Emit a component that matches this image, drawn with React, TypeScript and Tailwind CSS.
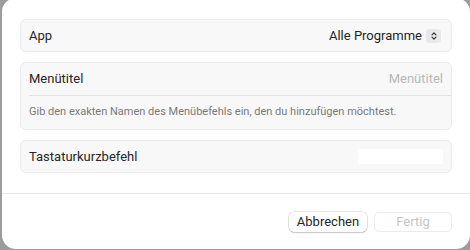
import React from "react";

const font = { fontFamily: "Roboto, 'Liberation Sans', sans-serif" };

/** Up/down chevron in a small rounded box (popup button indicator) */
const Stepper: React.FC = () => (
  <span className="flex h-[14px] w-[15px] items-center justify-center rounded-[4px] bg-[#e8e8e8]">
    <svg viewBox="0 0 10 12" className="h-[10px] w-[8px] text-[#333]" aria-hidden="true">
      <path d="M2.5 4.5L5 2l2.5 2.5M2.5 7.5L5 10l2.5-2.5" fill="none" stroke="currentColor" strokeWidth="1.4" strokeLinecap="round" strokeLinejoin="round" />
    </svg>
  </span>
);

export default function App() {
  return (
    <div className="h-[250px] w-[470px] overflow-hidden bg-[#9c9c9c] text-[13px] text-[#262626]" style={font}>
      <div className="ml-[2px] mt-[-2px] flex h-[251px] w-[468px] flex-col rounded-[14px] bg-white">
        <div className="flex flex-col gap-[10px] px-[18px] pt-[21px]">
          {/* App */}
          <div className="flex h-[33px] items-center justify-between rounded-[6px] border border-[#ececec] bg-[#f8f8f8] pl-[8px] pr-[10px]">
            <span>App</span>
            <div className="flex items-center gap-[4px]">
              <span>Alle Programme</span>
              <Stepper />
            </div>
          </div>

          {/* Menütitel */}
          <div className="flex h-[68px] flex-col rounded-[6px] border border-[#ececec] bg-[#f8f8f8] pl-[8px]">
            <div className="flex h-[33px] items-center justify-between border-b border-[#e4e4e4] pr-[8px]">
              <span>Menütitel</span>
              <span className="text-[#b8b8b8]">Menütitel</span>
            </div>
            <div className="flex flex-1 items-center text-[11px] text-[#7a7a7a]">
              Gib den exakten Namen des Menübefehls ein, den du hinzufügen möchtest.
            </div>
          </div>

          {/* Tastaturkurzbefehl */}
          <div className="flex h-[33px] items-center justify-between rounded-[6px] border border-[#ececec] bg-[#f8f8f8] pl-[8px] pr-[8px]">
            <span>Tastaturkurzbefehl</span>
            <div className="h-[15px] w-[85px] bg-white" />
          </div>
        </div>

        <div className="mt-[20px] h-px bg-[#e6e6e6]" />

        <div className="flex justify-end gap-[7px] pr-[18px] pt-[18px]">
          <button className="flex h-[20px] w-[78px] items-center justify-center rounded-[5px] bg-white text-[13px] text-[#262626] shadow-[0_0_0_0.5px_rgba(0,0,0,0.18),0_1px_1.5px_rgba(0,0,0,0.15)]">
            Abbrechen
          </button>
          <button className="flex h-[20px] w-[78px] items-center justify-center rounded-[5px] border border-[#ececec] bg-white text-[13px] text-[#c4c4c4]">
            Fertig
          </button>
        </div>
      </div>
    </div>
  );
}
